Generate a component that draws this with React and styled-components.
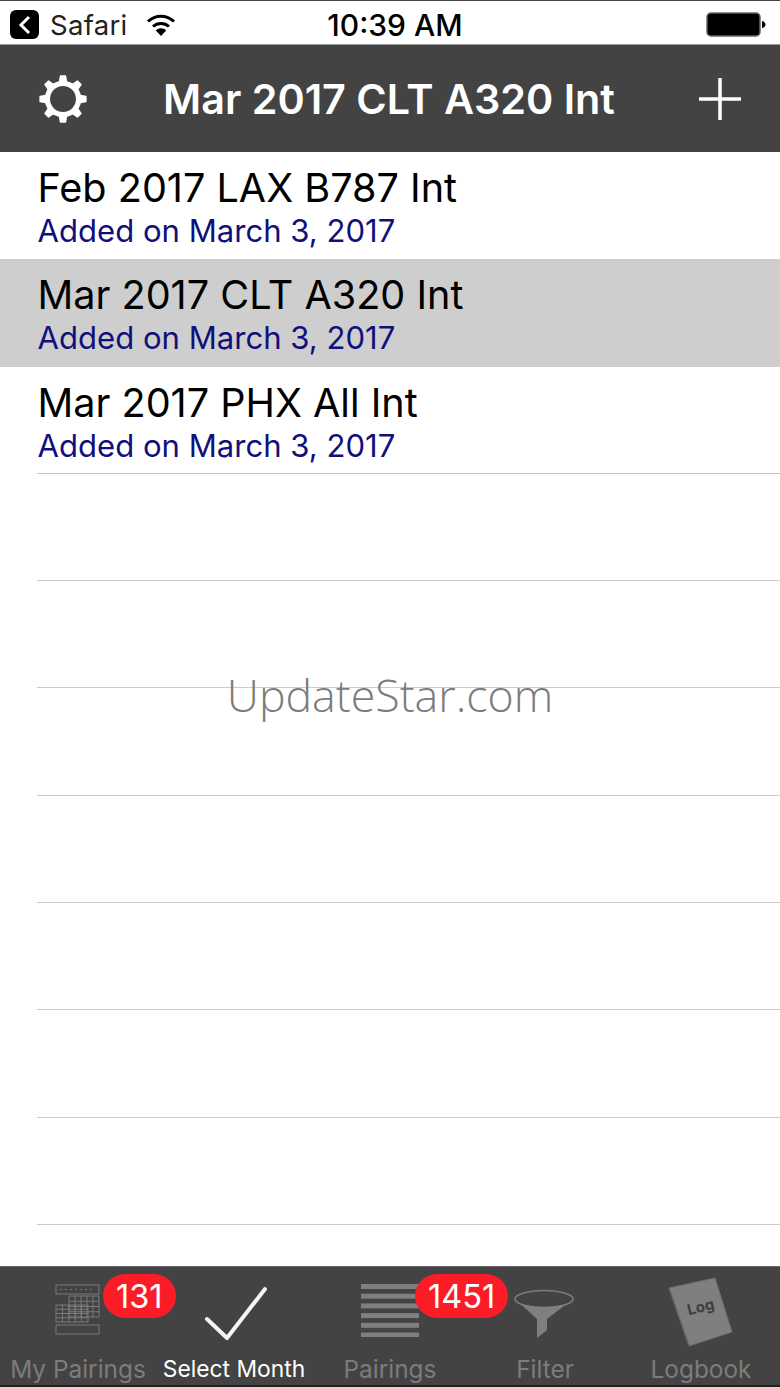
import React from "react";
import styled, { createGlobalStyle } from "styled-components";

const GlobalStyle = createGlobalStyle`
  html, body {
    margin: 0;
    padding: 0;
    background: #fff;
    font-family: Inter, "Liberation Sans", sans-serif;
  }
`;

const Page = styled.div`
  position: relative;
  display: flex;
  flex-direction: column;
  width: 780px;
  height: 1387px;
  overflow: hidden;
  background: #fff;
`;

const StatusBar = styled.div`
  display: grid;
  grid-template-columns: 327px 136px 1fr;
  align-items: center;
  box-sizing: border-box;
  height: 45px;
  padding-top: 4px;
  border-top: 1px solid #444;
  border-bottom: 1px solid #9a9a9a;
  color: #000;
`;

const StatusLeft = styled.div`
  display: flex;
  align-items: center;
  padding-left: 10px;
`;

const BackChip = styled.div`
  display: flex;
  align-items: center;
  justify-content: center;
  width: 29px;
  height: 29px;
  border-radius: 6px;
  background: #000;
`;

const Carrier = styled.span`
  margin-left: 11px;
  margin-right: 18px;
  font-size: 27.5px;
  letter-spacing: 0.3px;
  color: #222;
`;

const Clock = styled.div`
  font-size: 30px;
  font-weight: 500;
  white-space: nowrap;
  text-align: center;
`;

const BatteryWrap = styled.div`
  display: flex;
  justify-content: flex-end;
  padding-right: 14px;
`;

const NavBar = styled.div`
  display: flex;
  align-items: center;
  justify-content: space-between;
  box-sizing: border-box;
  height: 107px;
  padding: 0 38px 0 39px;
  background: #434343;
  color: #fff;
`;

const NavTitle = styled.div`
  margin-right: 7px;
  font-size: 41.3px;
  font-weight: 600;
  white-space: nowrap;
`;

const List = styled.div`
  display: flex;
  flex-direction: column;
  flex: 1;
`;

const Row = styled.div`
  display: flex;
  flex-direction: column;
  box-sizing: border-box;
  height: 107.3px;
  padding: 12px 0 0 37.5px;
  background: ${props => (props.$selected ? "#cecece" : "#fff")};
`;

const RowTitle = styled.div`
  font-size: 39.6px;
  line-height: 48px;
  color: #000;
  white-space: nowrap;
`;

const RowSub = styled.div`
  font-size: 31.1px;
  line-height: 36px;
  margin-top: 1px;
  color: #10107c;
  white-space: nowrap;
`;

const EmptyRow = styled.div`
  box-sizing: border-box;
  height: 107.3px;
  margin-left: 37px;
  border-bottom: 1px solid #cbcbcb;
`;

const LastRow = styled(Row)`
  position: relative;
  &::after {
    content: "";
    position: absolute;
    left: 37px;
    right: 0;
    bottom: 0;
    height: 1px;
    background: #c4c4c4;
  }
`;

const Watermark = styled.div`
  position: absolute;
  top: 667px;
  left: 0;
  right: 0;
  font-family: "Open Sans", "Liberation Sans", sans-serif;
  font-size: 44.7px;
  font-weight: 300;
  line-height: 56px;
  text-align: center;
  color: #7c7c7c;
`;

const TabBar = styled.div`
  display: grid;
  grid-template-columns: repeat(5, 156px);
  box-sizing: border-box;
  height: 121px;
  border-top: 1px solid #666;
  border-bottom: 2px solid #222;
  background: #434343;
`;

const Tab = styled.div`
  position: relative;
  display: flex;
  flex-direction: column;
  align-items: center;
`;

const TabIcon = styled.div`
  display: flex;
  align-items: flex-start;
  justify-content: center;
  height: 86px;
  padding-top: ${props => props.$top}px;
  padding-right: ${props => props.$shift || 0}px;
  box-sizing: border-box;
`;

const TabLabel = styled.div`
  padding-right: ${props => props.$shift || 0}px;
  font-size: ${props => (props.$active ? 22.8 : 24.4)}px;
  line-height: 32px;
  white-space: nowrap;
  color: ${props => (props.$active ? "#fff" : "#7c7c7c")};
`;

const Badge = styled.div`
  position: absolute;
  top: 7px;
  left: ${props => props.$left}px;
  display: flex;
  align-items: center;
  justify-content: center;
  height: 44px;
  padding: 0 13px;
  border-radius: 22px;
  background: #fc1c28;
  color: #fff;
  font-size: 32.5px;
  white-space: nowrap;
`;

function gearPath(cx, cy, outer, inner, teeth) {
  const step = (Math.PI * 2) / teeth;
  const pts = [];
  for (let i = 0; i < teeth; i++) {
    const a = i * step - Math.PI / 2;
    const w = step * 0.2;
    pts.push([a - w * 1.25, inner], [a - w * 0.7, outer], [a + w * 0.7, outer], [a + w * 1.25, inner]);
  }
  return (
    pts
      .map(([a, r], i) => `${i ? "L" : "M"}${(cx + r * Math.cos(a)).toFixed(2)} ${(cy + r * Math.sin(a)).toFixed(2)}`)
      .join(" ") + " Z"
  );
}

const GearIcon = () => (
  <svg width="48" height="48" viewBox="0 0 50 50">
    <path d={gearPath(25, 25, 24, 18.5, 8)} fill="#fff" stroke="#fff" strokeWidth="1.5" strokeLinejoin="round" />
    <circle cx="25" cy="25" r="13.5" fill="#434343" />
  </svg>
);

const PlusIcon = () => (
  <svg width="44" height="44" viewBox="0 0 44 44">
    <path d="M22 1V43M1 22H43" stroke="#fff" strokeWidth="3.5" fill="none" />
  </svg>
);

const WifiIcon = () => (
  <svg width="30" height="24" viewBox="0 0 30 24">
    <path d="M2 8.5C9.5 1.5 20.500 1.500 28 8.500" stroke="#000" strokeWidth="3" fill="none" />
    <path d="M7 13.500C11.500 9.500 18.500 9.500 23 13.500" stroke="#000" strokeWidth="3" fill="none" />
    <path d="M9.800 17.500C12.500 14.500 17.500 14.500 20.200 17.500L15 23Z" fill="#000" />
  </svg>
);

const BatteryIcon = () => (
  <svg width="60" height="26" viewBox="0 0 60 26">
    <rect x="1" y="1" width="53" height="23" rx="4" fill="#000" stroke="#666" strokeWidth="1.500" />
    <path d="M56 9C58.500 9.500 59.500 11 59.500 12.500C59.500 14 58.500 15.500 56 16Z" fill="#000" />
  </svg>
);

// grid cells of the small calendar
function gridLines(x, y, w, h, stepX, stepY) {
  let d = "";
  for (let i = 0; i <= w / stepX; i++) d += `M${x + i * stepX} ${y}V${y + h}`;
  for (let i = 0; i <= h / stepY; i++) d += `M${x} ${y + i * stepY}H${x + w}`;
  return d;
}

const CalendarIcon = () => (
  <svg width="46" height="52" viewBox="0 0 46 52" fill="none" stroke="#7a7a7a" strokeWidth="1">
    <rect x="1" y="1" width="43" height="9" />
    <path d="M5 5.500H40" stroke="#777" strokeDasharray="2 3" />
    <path d={gridLines(14, 12, 30, 21, 6, 5.25)} />
    <path d={gridLines(1, 21, 32, 17, 6.400, 4.250)} />
    <rect x="1" y="41" width="43" height="9" />
  </svg>
);

const CheckIcon = () => (
  <svg width="66" height="56" viewBox="0 0 66 56">
    <path d="M6 34L26 53L64 4" fill="none" stroke="#f4f4f4" strokeWidth="4" strokeLinecap="round" strokeLinejoin="round" />
  </svg>
);

const LinesIcon = () => (
  <svg width="58" height="54" viewBox="0 0 58 54" fill="#7f7f7f">
    {[0, 1, 2, 3, 4, 5].map(i => (
      <rect key={i} x="0" y={1 + i * 9.7} width="58" height="5" />
    ))}
  </svg>
);

const FunnelIcon = () => (
  <svg width="60" height="50" viewBox="0 0 60 50">
    <path d="M1 10L23 30V49L33 41V30L59 10C50 20 10 20 1 10Z" fill="#7f7f7f" />
    <ellipse cx="30" cy="10" rx="29" ry="8.500" fill="#434343" stroke="#7f7f7f" strokeWidth="1.500" />
  </svg>
);

const LogbookIcon = () => (
  <svg width="66" height="70" viewBox="0 0 66 70">
    <path d="M1 11L47 1L64 55L21 69Z" fill="#7f7f7f" stroke="#6e6e6e" strokeWidth="1" strokeLinejoin="round" />
    <path d="M1 11L21 69" fill="none" stroke="#5e5e5e" strokeWidth="2" strokeDasharray="1.500 2" />
    <text
      x="34"
      y="35"
      fontSize="15"
      fontWeight="700"
      fontFamily="Inter, sans-serif"
      fill="#3e3e3e"
      textAnchor="middle"
      transform="rotate(-14 34 35)"
    >
      Log
    </text>
  </svg>
);

const items = [
  { title: "Feb 2017 LAX B787 Int" },
  { title: "Mar 2017 CLT A320 Int", selected: true },
  { title: "Mar 2017 PHX All Int" }
];

function App() {
  return (
    <Page>
      <GlobalStyle />
      <StatusBar>
        <StatusLeft>
          <BackChip>
            <svg width="14" height="20" viewBox="0 0 14 20">
              <path d="M11 2L3 10L11 18" fill="none" stroke="#fff" strokeWidth="3" />
            </svg>
          </BackChip>
          <Carrier>Safari</Carrier>
          <WifiIcon />
        </StatusLeft>
        <Clock>10:39 AM</Clock>
        <BatteryWrap>
          <BatteryIcon />
        </BatteryWrap>
      </StatusBar>
      <NavBar>
        <GearIcon />
        <NavTitle>Mar 2017 CLT A320 Int</NavTitle>
        <PlusIcon />
      </NavBar>
      <List>
        {items.map((item, i) => {
          const Item = i === items.length - 1 ? LastRow : Row;
          return (
            <Item key={item.title} $selected={item.selected}>
              <RowTitle>{item.title}</RowTitle>
              <RowSub>Added on March 3, 2017</RowSub>
            </Item>
          );
        })}
        {[0, 1, 2, 3, 4, 5, 6].map(i => (
          <EmptyRow key={i} />
        ))}
      </List>
      <TabBar>
        <Tab>
          <TabIcon $top={17}>
            <CalendarIcon />
          </TabIcon>
          <TabLabel>My Pairings</TabLabel>
          <Badge $left={103}>131</Badge>
        </Tab>
        <Tab>
          <TabIcon $top={18}>
            <CheckIcon />
          </TabIcon>
          <TabLabel $active>Select Month</TabLabel>
        </Tab>
        <Tab>
          <TabIcon $top={16}>
            <LinesIcon />
          </TabIcon>
          <TabLabel>Pairings</TabLabel>
          <Badge $left={103}>1451</Badge>
        </Tab>
        <Tab>
          <TabIcon $top={22} $shift={5}>
            <FunnelIcon />
          </TabIcon>
          <TabLabel $shift={2}>Filter</TabLabel>
        </Tab>
        <Tab>
          <TabIcon $top={10} $shift={2}>
            <LogbookIcon />
          </TabIcon>
          <TabLabel $shift={2}>Logbook</TabLabel>
        </Tab>
      </TabBar>
      <Watermark>UpdateStar.com</Watermark>
    </Page>
  );
}

export default App;
